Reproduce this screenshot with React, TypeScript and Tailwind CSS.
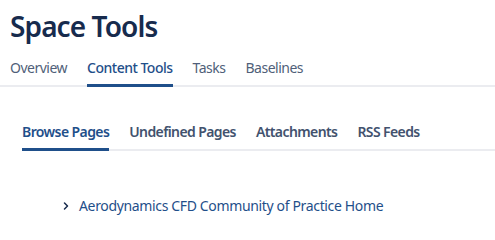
import { ChevronRight } from "lucide-react";

const TOP_TABS = ["Overview", "Content Tools", "Tasks", "Baselines"];
const SUB_TABS = ["Browse Pages", "Undefined Pages", "Attachments", "RSS Feeds"];

export default function App() {
  return (
    <div className="h-[240px] w-[495px] overflow-hidden bg-white font-['Noto_Sans',sans-serif]">
      <h1 className="pl-[10px] pt-[6px] text-[28px] font-semibold leading-[40px] tracking-[-0.9px] text-[#172b4d]">
        Space Tools
      </h1>

      {/* top level tabs */}
      <div className="mt-[12px] flex gap-[20px] border-b-2 border-[#ebecf0] pl-[10px]">
        {TOP_TABS.map((t) => (
          <div
            key={t}
            className={`-mb-[2px] border-b-[3px] pb-[6px] text-[14px] leading-[20px] tracking-[-0.5px] ${
              t === "Content Tools"
                ? "border-[#1f4f8a] font-medium text-[#1f4f8a]"
                : "border-transparent text-[#505f79]"
            }`}
          >
            {t}
          </div>
        ))}
      </div>

      {/* content tools sub tabs */}
      <div className="ml-[22px] mt-[35px] flex gap-[20px] border-b-2 border-[#ebecf0]">
        {SUB_TABS.map((t) => (
          <div
            key={t}
            className={`-mb-[2px] border-b-[3px] pb-[6px] text-[14px] font-semibold leading-[20px] tracking-[-0.6px] ${
              t === "Browse Pages"
                ? "border-[#1f4f8a] text-[#1f4f8a]"
                : "border-transparent text-[#42526e]"
            }`}
          >
            {t}
          </div>
        ))}
      </div>

      <div className="ml-[60px] mt-[45px] flex items-center gap-[7px]">
        <ChevronRight size={12} strokeWidth={3} className="text-[#172b4d]" />
        <a className="text-[14px] leading-[20px] tracking-[-0.35px] text-[#1f4f8a]">
          Aerodynamics CFD Community of Practice Home
        </a>
      </div>
    </div>
  );
}
